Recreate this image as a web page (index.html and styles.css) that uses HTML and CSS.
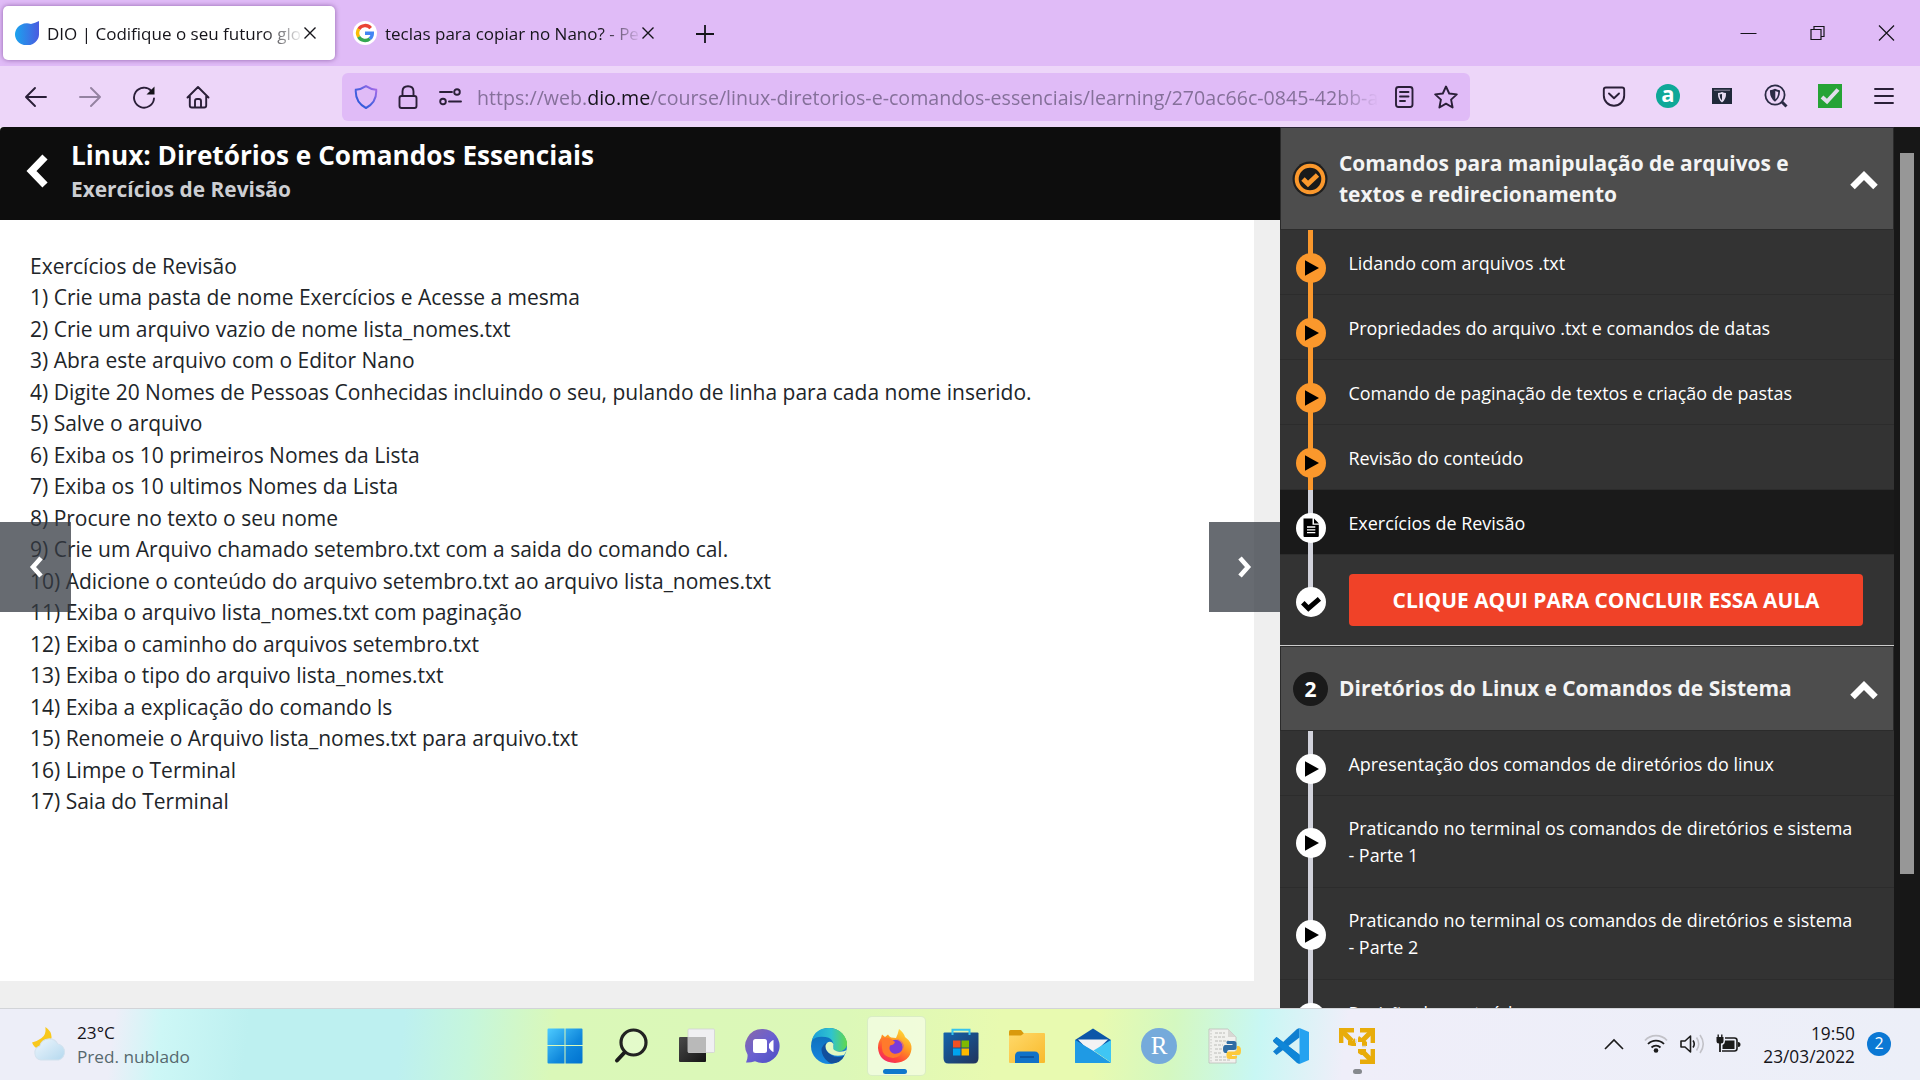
FILE: index.html
```html
<!DOCTYPE html>
<html lang="pt-BR">
<head>
<meta charset="utf-8">
<title>DIO | Codifique o seu futuro</title>
<link rel="stylesheet" href="styles.css">
</head>
<body>
<svg class="defs" aria-hidden="true">
  <defs>
    <linearGradient id="gDio" x1="0" x2="1"><stop offset="0" stop-color="#1ba3ee"/><stop offset="1" stop-color="#4a5be0"/></linearGradient>
    <linearGradient id="gShield" x1="0" y1="1" x2="1" y2="0"><stop offset="0" stop-color="#2456d8"/><stop offset=".5" stop-color="#4f62e0"/><stop offset="1" stop-color="#b06ae8"/></linearGradient>
    <linearGradient id="gWin" x1="0" y1="0" x2="1" y2="1"><stop offset="0" stop-color="#4dcbff"/><stop offset=".6" stop-color="#1088dc"/><stop offset="1" stop-color="#0072cf"/></linearGradient>
    <linearGradient id="gChat" x1="0" y1="0" x2="1" y2="1"><stop offset="0" stop-color="#8a6aa8"/><stop offset=".5" stop-color="#6a5fd0"/><stop offset="1" stop-color="#4a4fc4"/></linearGradient>
    <linearGradient id="gEdgeTop" x1="0" x2="1"><stop offset="0" stop-color="#1a9ed8"/><stop offset=".55" stop-color="#2fc3cf"/><stop offset="1" stop-color="#62d84c"/></linearGradient>
    <linearGradient id="gEdge" x1="0" y1="0" x2="0" y2="1"><stop offset="0" stop-color="#0c6ab4"/><stop offset="1" stop-color="#1788e0"/></linearGradient>
    <linearGradient id="gFox" x1=".8" y1="0" x2=".2" y2="1"><stop offset="0" stop-color="#ffe03a"/><stop offset=".4" stop-color="#ff9a22"/><stop offset=".75" stop-color="#ff4738"/><stop offset="1" stop-color="#f0246c"/></linearGradient>
    <linearGradient id="gStore" x1="0" y1="0" x2="1" y2="1"><stop offset="0" stop-color="#1464ac"/><stop offset="1" stop-color="#22345c"/></linearGradient>
    <linearGradient id="gFolder" x1="0" y1="0" x2="1" y2="1"><stop offset="0" stop-color="#ffd96a"/><stop offset="1" stop-color="#f8ba2c"/></linearGradient>
    <linearGradient id="gDark" x1="0" y1="0" x2="1" y2="1"><stop offset="0" stop-color="#4a4a4a"/><stop offset="1" stop-color="#141414"/></linearGradient>
    <linearGradient id="gCloud" x1="0" y1="0" x2="1" y2="1"><stop offset="0" stop-color="#eef6fd"/><stop offset="1" stop-color="#b4d8ee"/></linearGradient>
    <symbol id="play" viewBox="0 0 30 30"><circle cx="15" cy="15" r="15" fill="currentColor"/><path class="glyph" d="M9 7.2L23 15 9 22.8z"/></symbol>
    <symbol id="check" viewBox="0 0 30 30"><circle cx="15" cy="15" r="15" fill="currentColor"/><path d="M6.800 15.800l5.600 5.600L23.400 11.800" fill="none" stroke="#000" stroke-width="5"/></symbol>
    <symbol id="doc" viewBox="0 0 30 30"><circle cx="15" cy="15" r="15" fill="currentColor"/><path d="M7.500 5.500h9v6.300h6.300V23q0 1-1 1H8.500q-1 0-1-1z"/><path d="M18 5.500l4.900 4.900H18z"/><path d="M11 14h8.300M11 16.800h8.300M11 19.600h8.300" stroke="#fff" stroke-width="1.300"/></symbol>
    <symbol id="up" viewBox="0 0 28 20"><path d="M2.500 16L14 4.500 25.500 16" fill="none" stroke="currentColor" stroke-width="6.400"/></symbol>
    <symbol id="x" viewBox="0 0 16 16"><path d="M2.500 2.500l11 11M13.500 2.500l-11 11" fill="none" stroke="currentColor" stroke-width="1.400"/></symbol>
  </defs>
</svg>

<header class="tabbar">
  <div class="tab active">
    <svg class="fav" viewBox="0 0 24 24"><path d="M24 0v13a12 11 0 1 1-8-10q4-1 8-3z" fill="url(#gDio)"/></svg>
    <span class="tab-title">DIO | Codifique o seu futuro glo</span>
    <svg class="close"><use href="#x"/></svg>
  </div>
  <div class="tab second">
    <svg class="fav" viewBox="0 0 24 24"><circle cx="12" cy="12" r="12" fill="#fff"/><g fill="none" stroke-width="3.400"><path d="M17.700 7.100A7.400 7.400 0 0 0 5.800 8.100" stroke="#ea4335"/><path d="M5.800 8A7.400 7.400 0 0 0 5.800 16" stroke="#fbbc05"/><path d="M5.700 15.900A7.400 7.400 0 0 0 16.900 17.700" stroke="#34a853"/><path d="M12 12.200h7.300a7.400 7.400 0 0 1-2.500 5.600" stroke="#4285f4"/></g></svg>
    <span class="tab-title">teclas para copiar no Nano? - Pe</span>
    <svg class="close"><use href="#x"/></svg>
  </div>
  <svg class="newtab" viewBox="0 0 18 18"><path d="M9 0v18M0 9h18" stroke="#15141a" stroke-width="1.800"/></svg>
  <div class="winbtns">
    <svg viewBox="0 0 16 16"><path d="M0 8.500h16" stroke="#15141a"/></svg>
    <svg viewBox="0 0 16 16"><path d="M1.500 4.500h10v10h-10zM4.500 4.500v-3h10v10h-3" fill="none" stroke="#15141a" stroke-width="1.200"/></svg>
    <svg viewBox="0 0 16 16"><path d="M.5.500l15 15M15.500.500l-15 15" stroke="#15141a" stroke-width="1.200"/></svg>
  </div>
</header>

<nav class="toolbar">
  <div class="tools left">
    <svg viewBox="0 0 24 24"><path d="M22 12H2.500M11 3L2 12l9 9" class="ln"/></svg>
    <svg viewBox="0 0 24 24" class="dim"><path d="M2 12h19.500M13 3l9 9-9 9" class="ln"/></svg>
    <svg viewBox="0 0 24 24"><path d="M19.500 6A10 10 0 1 0 22 13.500" class="ln"/><path d="M22.500 1.500v8h-8z" fill="#15141a"/></svg>
    <svg viewBox="0 0 24 24"><path d="M1.500 12.500L12 2l10.500 10.500M3.800 11v9.500q0 2 2 2h12.400q2 0 2-2V11M9 22v-6q0-2 2-2h2q2 0 2 2v6" class="ln"/></svg>
  </div>
  <div class="urlbar">
    <svg viewBox="0 0 24 24"><path d="M12 1.200Q7 4.500 1.800 4.800 1 17 12 23 23 17 22.200 4.800 17 4.500 12 1.200z" fill="none" stroke="url(#gShield)" stroke-width="2"/></svg>
    <svg viewBox="0 0 24 24"><path d="M6.500 11V6.500q0-5.300 5.500-5.300t5.500 5.300V11M5.500 11h13q2 0 2 2v8q0 2-2 2h-13q-2 0-2-2v-8q0-2 2-2z" class="ln"/></svg>
    <svg viewBox="0 0 24 24"><path d="M2 7h12M11 16.500h12" class="ln"/><circle cx="19" cy="7" r="2.800" class="ln"/><circle cx="5" cy="16.500" r="2.800" class="ln"/></svg>
    <span class="url">https://web.<b>dio.me</b>/course/linux-diretorios-e-comandos-essenciais/learning/270ac66c-0845-42bb-a</span>
    <svg viewBox="0 0 24 24"><rect x="4" y="2" width="16.500" height="20" rx="2.500" class="ln"/><path d="M8 7h8.500M8 11.500h8.500M8 16h5" class="ln"/></svg>
    <svg viewBox="0 0 24 24"><path d="M12 1.500l3.200 7 7.600.900-5.700 5.200 1.500 7.900L12 18.600l-6.600 3.900 1.500-7.900L1.200 9.400l7.600-.900z" class="ln"/></svg>
  </div>
  <div class="tools right">
    <svg viewBox="0 0 24 24"><path d="M4 3.500h16q2.200 0 2.200 2.200v5.800a10.200 10.200 0 0 1-20.400 0V5.700q0-2.200 2.200-2.200zM7 9.500l5 4.800 5-4.800" class="ln"/></svg>
    <span class="ext-a">a</span>
    <svg viewBox="0 0 24 24"><path d="M2 4h20v16H2z" fill="#20293a"/><path d="M4 6.200h16" stroke="#8d8ba0"/><path d="M12 8q2 1 4 1 .4 6-4 9.500Q7.600 15 8 9q2 0 4-1z" fill="#e6ddf2"/><path d="M12 10v6.500Q9.500 14 9.500 10.500z" fill="#20293a"/></svg>
    <svg viewBox="0 0 24 24"><circle cx="11" cy="11" r="9.600" fill="none" stroke="#2b2b45" stroke-width="1.800"/><path d="M18 18l4.500 4.500" stroke="#2b2b45" stroke-width="3"/><path d="M11 4.800q2.500 1.400 5 1.400.500 7.500-5 11.500Q5.500 13.700 6 6.200q2.500 0 5-1.400z" fill="#2b2b45"/><path d="M11.300 7q1.300.800 2.900.900 0 5-2.900 7.300z" fill="#edd6f9"/></svg>
    <svg viewBox="0 0 24 24"><path d="M0 0h24v24H0z" fill="#26a336"/><path d="M4 13l5 4.500L20 5.500" fill="none" stroke="#e2dcec" stroke-width="4"/></svg>
    <svg viewBox="0 0 24 24"><path d="M3 5h18M3 12h18M3 19h18" class="ln"/></svg>
  </div>
</nav>

<div class="page">
  <main class="lesson">
    <div class="lesson-head">
      <svg class="back" viewBox="0 0 22 34"><path d="M19 3L5.500 17 19 31" fill="none" stroke="#fff" stroke-width="7.200"/></svg>
      <div>
        <h1>Linux: Diretórios e Comandos Essenciais</h1>
        <h2>Exercícios de Revisão</h2>
      </div>
    </div>
    <div class="sheet">
      <p>Exercícios de Revisão<br>
      1) Crie uma pasta de nome Exercícios e Acesse a mesma<br>
      2) Crie um arquivo vazio de nome lista_nomes.txt<br>
      3) Abra este arquivo com o Editor Nano<br>
      4) Digite 20 Nomes de Pessoas Conhecidas incluindo o seu, pulando de linha para cada nome inserido.<br>
      5) Salve o arquivo<br>
      6) Exiba os 10 primeiros Nomes da Lista<br>
      7) Exiba os 10 ultimos Nomes da Lista<br>
      8) Procure no texto o seu nome<br>
      9) Crie um Arquivo chamado setembro.txt com a saida do comando cal.<br>
      10) Adicione o conteúdo do arquivo setembro.txt ao arquivo lista_nomes.txt<br>
      11) Exiba o arquivo lista_nomes.txt com paginação<br>
      12) Exiba o caminho do arquivos setembro.txt<br>
      13) Exiba o tipo do arquivo lista_nomes.txt<br>
      14) Exiba a explicação do comando ls<br>
      15) Renomeie o Arquivo lista_nomes.txt para arquivo.txt<br>
      16) Limpe o Terminal<br>
      17) Saia do Terminal</p>
    </div>
    <div class="pager prev"><svg viewBox="0 0 14 22"><path d="M12 2L4 11l8 9" fill="none" stroke="#fff" stroke-width="4.600"/></svg></div>
    <div class="pager next"><svg viewBox="0 0 14 22"><path d="M2 2l8 9-8 9" fill="none" stroke="#fff" stroke-width="4.600"/></svg></div>
  </main>

  <aside class="course">
    <section>
      <div class="mod tall">
        <svg class="badge" viewBox="0 0 36 36"><circle cx="18" cy="18" r="17.500" fill="#1f1f1f"/><circle cx="18" cy="18" r="13.300" fill="#1a1a1a" stroke="#fb982c" stroke-width="4"/><path d="M11 18l5 5 9.500-9" fill="none" stroke="#fb982c" stroke-width="4.800"/></svg>
        <h3>Comandos para manipulação de arquivos e textos e redirecionamento</h3>
        <svg class="toggle"><use href="#up"/></svg>
      </div>
      <ul>
        <li class="item done"><svg><use href="#play"/></svg><span>Lidando com arquivos .txt</span></li>
        <li class="item done"><svg><use href="#play"/></svg><span>Propriedades do arquivo .txt e comandos de datas</span></li>
        <li class="item done"><svg><use href="#play"/></svg><span>Comando de paginação de textos e criação de pastas</span></li>
        <li class="item done"><svg><use href="#play"/></svg><span>Revisão do conteúdo</span></li>
        <li class="item current"><svg><use href="#doc"/></svg><span>Exercícios de Revisão</span></li>
        <li class="item finish"><svg><use href="#check"/></svg><button>CLIQUE AQUI PARA CONCLUIR ESSA AULA</button></li>
      </ul>
    </section>
    <section>
      <div class="mod">
        <span class="num">2</span>
        <h3>Diretórios do Linux e Comandos de Sistema</h3>
        <svg class="toggle"><use href="#up"/></svg>
      </div>
      <ul>
        <li class="item"><svg><use href="#play"/></svg><span>Apresentação dos comandos de diretórios do linux</span></li>
        <li class="item two"><svg><use href="#play"/></svg><span>Praticando no terminal os comandos de diretórios e sistema - Parte 1</span></li>
        <li class="item two"><svg><use href="#play"/></svg><span>Praticando no terminal os comandos de diretórios e sistema - Parte 2</span></li>
        <li class="item"><svg><use href="#play"/></svg><span>Revisão do conteúdo</span></li>
      </ul>
    </section>
  </aside>
  <div class="scroll"><div class="thumb"></div></div>
</div>

<footer class="taskbar">
  <div class="weather">
    <svg viewBox="0 0 34 34"><path d="M14 1q1 8-4 11-4 3-9 4 2 6 8 6 10-1 11-11 0-6-6-10z" fill="#f8c81c"/><path d="M9.500 33a7 7 0 0 1-1-13.500 9.500 9.500 0 0 1 17.500-2 8 8 0 0 1 1 15.500z" fill="url(#gCloud)" stroke="#d3e2ee"/></svg>
    <div><span>23°C</span><span class="sub">Pred. nublado</span></div>
  </div>
  <div class="apps">
    <div class="app"><svg viewBox="0 0 36 36"><path d="M1.500.500h16v16.500h-17V1.500q0-1 1-1zM18.500.500h16q1 0 1 1V17h-17zM.500 18h17v17.500h-16q-1 0-1-1zM18.500 18h17v16.500q0 1-1 1h-16z" fill="url(#gWin)"/></svg></div>
    <div class="app"><svg viewBox="0 0 36 36"><circle cx="20.500" cy="14.500" r="12.500" fill="#fff" fill-opacity=".25" stroke="#222" stroke-width="3.200"/><path d="M11.500 24.500l-7.500 8" stroke="#1c1c1c" stroke-width="4" stroke-linecap="round"/></svg></div>
    <div class="app"><svg viewBox="0 0 36 36"><rect x="0" y="9" width="27" height="25" rx="1" fill="url(#gDark)"/><rect x="9" y="1" width="26.500" height="23.500" rx="1" fill="#f0f0f2" stroke="#d2d2d4" stroke-width=".8"/><path d="M9 9h18v15.500H10q-1 0-1-1z" fill="#b9b9b9"/></svg></div>
    <div class="app"><svg viewBox="0 0 36 36"><path d="M18 1a17 17 0 1 1-8 32.200Q5 35 1 34.500q2-4 1.500-8A17 17 0 0 1 18 1z" fill="url(#gChat)"/><rect x="8" y="11" width="14" height="14" rx="2.500" fill="#fff"/><path d="M24 16q3-4 4.500-4v12q-1.500 0-4.500-4z" fill="#fff"/></svg></div>
    <div class="app"><svg viewBox="0 0 36 36"><circle cx="18" cy="18" r="18" fill="url(#gEdge)"/><path d="M1 12Q4 .3 18 0q14 .5 18 14 1 8-8 9.500-7-.2-6-4 1-1.500.5-3.500-1-6-8-7Q6 7.500 1 12z" fill="url(#gEdgeTop)"/><path d="M15 15q-6 4-4 10 2 7 9 10.500 10 0 13.500-8-8 3.500-14-1-5-4-2.500-9z" fill="#124f9c"/><path d="M22.500 16q-2-3-5-2-3 1.500-3 4.500 0 5 6 8 5 2.200 12.500.500L36 22q-3 2-8 1.800-5-.8-5.800-3.300z" fill="#e2f8c0"/></svg></div>
    <div class="app on"><svg viewBox="0 0 36 36"><path d="M22 1q5 4 6 8 7 5 6.500 12Q33 34 18 35 2 34 1 20q0-6 3-10l1-3.500 3 2.500 3-2.500q1 2 3 3l5 .5q2-4 3-9z" fill="url(#gFox)"/><circle cx="18.500" cy="19" r="7.200" fill="#7a3bd8"/><path d="M5 10q6-1 9 1l4 3q-1 3-5 3.500-2 5 3 8 6 1 9-3-1 7-9 7.500Q5 29 5 20z" fill="#ff7a2c"/><path d="M19 11q6 1 7.500 6 0 3-1 5 3-8-6.500-11z" fill="#b13cd0"/></svg></div>
    <div class="app"><svg viewBox="0 0 36 36"><path d="M.5 5.500q0-1 1-1h33q1 0 1 1V30q0 5.500-5 5.500h-25q-5 0-5-5.500z" fill="url(#gStore)"/><path d="M9.500 7V1.800h17V7" fill="none" stroke="#36c4ee" stroke-width="2"/><path d="M10 12.500h7.500V19.500H10z" fill="#f25022"/><path d="M18.500 12.500H26V19.500h-7.500z" fill="#7fba00"/><path d="M10 20.500h7.500V27.500H10z" fill="#00a4ef"/><path d="M18.500 20.500H26V27.500h-7.500z" fill="#ffb900"/></svg></div>
    <div class="app"><svg viewBox="0 0 36 36"><path d="M0 8V3.500Q0 2 1.500 2H12l3 3.500V9z" fill="#d99a0c"/><path d="M0 7.500h12l3.500-2.500H35q1 0 1 1v28q0 1-1 1H1q-1 0-1-1z" fill="url(#gFolder)"/><path d="M6 35V28q0-4.500 4.500-4.500h15q4.500 0 4.500 4.500v7z" fill="#1072c8"/><path d="M11 29h14" stroke="#0a4c94" stroke-width="1.500"/></svg></div>
    <div class="app"><svg viewBox="0 0 36 36"><path d="M0 12L18 .5 36 12v8H0z" fill="#0b56a8"/><path d="M3 11.500h30L20 24h-5z" fill="#f2f2f4"/><path d="M0 12l20 12.500 16 10.500H1q-1 0-1-1z" fill="#1f9ee6"/><path d="M36 12v22.500L18.500 22.500z" fill="#3fc6f4"/><path d="M0 12l18.500 11L36 35H1q-1 0-1-1z" fill="#1f9ae4"/></svg></div>
    <div class="app"><span class="r">R</span></div>
    <div class="app"><svg viewBox="0 0 36 36"><path d="M2 1h19l8 8v26H2z" fill="#f1f1ee" stroke="#bdbdb8" stroke-width=".8"/><path d="M21 1v8h8z" fill="#d8d8d4"/><path d="M4 2v32" stroke="#c4c4c0" stroke-dasharray="1.500 1.500"/><path d="M8 5h10M7 9h12M8 13h14M7 17h9M8 21h8M7 25h8M8 29h14M8 32h16" stroke="#bcbcb8" stroke-dasharray="3 1"/><path d="M21 13h6q2.500 0 2.500 2.500V20q0 2-2.500 2h-5q-2 0-2 3h-1.500Q16 25 16 21t2.500-4h7v-1H20q-1.500-3 1-3z" fill="#2f6da4"/><path d="M27.500 31h-5q-3 0-3-2.500v-3q0-2 2.500-2h5q3 0 3-3V18h1q3 0 3 4.500T31.500 27H25v1h5q.5 3-2.500 3z" fill="#fcc93a"/></svg></div>
    <div class="app"><svg viewBox="0 0 36 36"><path d="M0 12.500L3.500 9 27 27v8.500L25 35 .5 14z" fill="#0a6ab8"/><path d="M26.500 0v9.500L3.500 27 0 23.500 24 1z" fill="#0f7fd0"/><path d="M0 12.500L3.500 9l23 17.500V36L24 35z" fill="#0e86d8"/><path d="M26.500 0L36 4v28l-9.500 4z" fill="#25a2f0"/></svg></div>
    <div class="app run"><svg viewBox="0 0 36 36"><g fill="none" stroke="#e8ac0a" stroke-width="4.400"><path d="M2.200 15V2.200H15M21 2.200h12.800V15M33.800 21v12.800H21"/><path d="M3 3l10 10M33 3L24 12M33 33l-9-9" stroke-width="5"/></g><path d="M9 13h4l3-3v3h1v5h-4l-4-1zM20 8l8 6v4h-5v-4h-4v-4zM19 21h8v6h-5l-3-2z" fill="#e8ac0a"/><path d="M17 11v4M23 18.500h4" stroke="#d8d8da" stroke-width="1.600"/></svg></div>
  </div>
  <div class="tray">
    <svg class="chev" viewBox="0 0 20 12"><path d="M1 11l9-9 9 9" fill="none" stroke="#1b1b1b" stroke-width="1.600"/></svg>
    <svg class="wifi" viewBox="0 0 26 20"><g fill="none" stroke="#1b1b1b" stroke-width="1.800"><path d="M2 6.500a15 15 0 0 1 22 0" stroke="#c2c2c8"/><path d="M5 10a11 11 0 0 1 16 0M8.500 13.500a6.500 6.500 0 0 1 9 0"/></g><circle cx="13" cy="16.500" r="2.300" fill="#1b1b1b"/></svg>
    <svg class="snd" viewBox="0 0 25 20"><path d="M1 7h4l5.500-5v16L5 13H1z" fill="none" stroke="#1b1b1b" stroke-width="1.600" stroke-linejoin="round"/><path d="M13 6.500q2.500 3.500 0 7" fill="none" stroke="#1b1b1b" stroke-width="1.600"/><path d="M16.500 3.500q4.500 6.500 0 13M20 1q6.500 9 0 18" fill="none" stroke="#c2c2c8" stroke-width="1.600"/></svg>
    <svg class="bat" viewBox="0 0 25 20"><path d="M9 4h9.500q2.500 0 2.500 2.500v8q0 2.500-2.500 2.500H6" fill="none" stroke="#1b1b1b" stroke-width="1.600"/><path d="M9 6.500h9.500v8.500H6.500V11Q9 10 9 6.500zM22 8q2.500 0 2.500 2.500T22 13zM.5 3h7v4q0 2.500-2.600 2.500V18H3.100V9.500Q.5 9.500.5 7zM1.500.5h1.400V3H1.500zM5.100.5h1.400V3H5.100z" fill="#1b1b1b"/></svg>
    <div class="clock"><span>19:50</span><span>23/03/2022</span></div>
    <span class="notif">2</span>
  </div>
</footer>
</body>
</html>
```
FILE: styles.css
```css
* { box-sizing: border-box; }

body {
  margin: 0;
  width: 1920px;
  height: 1080px;
  overflow: hidden;
  display: flex;
  flex-direction: column;
  font-family: "Open Sans", "Noto Sans", sans-serif;
  color: #15141a;
}

svg { display: block; flex: none; }
.defs { width: 0; height: 0; position: absolute; }
.ln {
  fill: none;
  stroke: #2a1f38;
  stroke-width: 1.9;
  stroke-linejoin: round;
  stroke-linecap: round;
}

/* Tab strip */
.tabbar {
  height: 66px;
  flex: none;
  background: #e0bbf7;
  display: flex;
  align-items: center;
  padding-left: 3px;
}
.tab {
  width: 332px;
  height: 54px;
  display: flex;
  align-items: center;
  padding: 0 17px 0 12px;
}
.tab.active {
  background: #fff;
  border-radius: 5px;
  box-shadow: 0 0 5px rgba(80, 30, 110, .55);
}
.tab.second { margin-left: 6px; }
.fav { width: 24px; height: 24px; }
.tab-title {
  flex: 1;
  margin-left: 8px;
  white-space: nowrap;
  overflow: hidden;
  font-size: 17px;
  -webkit-mask-image: linear-gradient(90deg, #000 85%, transparent 101%);
  mask-image: linear-gradient(90deg, #000 85%, transparent 101%);
}
.close { width: 16px; height: 16px; margin-left: 1px; }
.newtab { width: 18px; height: 18px; margin-left: 23px; margin-top: 2px; }
.winbtns { margin-left: auto; margin-right: -1px; display: flex; }
.winbtns svg { width: 69px; height: 16px; }

/* Navigation toolbar */
.toolbar {
  height: 61px;
  flex: none;
  background: #edd6f9;
  display: flex;
  align-items: center;
  padding: 0 9px;
}
.tools { display: flex; align-items: center; }
.tools > svg { width: 24px; height: 24px; margin: 0 15px; }
.tools.right { margin-left: auto; margin-top: -2px; }
.dim { opacity: .45; }
.urlbar {
  width: 1128px;
  height: 48px;
  margin-left: 117px;
  padding: 0 3px;
  border-radius: 6px;
  background: #e0bbf7;
  display: flex;
  align-items: center;
}
.urlbar > svg { width: 24px; height: 24px; margin: 0 9px; }
.url {
  flex: 1;
  margin-left: 6px;
  padding-top: 1px;
  font-size: 19.6px;
  color: #85709a;
  white-space: nowrap;
  overflow: hidden;
  -webkit-mask-image: linear-gradient(90deg, #000 95%, transparent 99.5%);
  mask-image: linear-gradient(90deg, #000 95%, transparent 99.5%);
}
.url b { font-weight: 400; color: #15141a; }
.ext-a {
  width: 24px;
  height: 24px;
  margin: 0 15px;
  border-radius: 50%;
  background: #0fa898;
  color: #fff;
  font-weight: 700;
  font-size: 22px;
  line-height: 19px;
  text-align: center;
}

/* Page area */
.page {
  height: 881px;
  flex: none;
  display: flex;
  background: #171717;
}
.lesson {
  width: 1280px;
  position: relative;
  background: #efefef;
}
.lesson-head {
  height: 93px;
  display: flex;
  align-items: flex-start;
  padding: 10px 0 0 26px;
  background: #0d0d0d;
  border-top-left-radius: 4px;
}
.back { width: 22px; height: 34px; margin: 17px 23px 0 0; }
.lesson-head h1 {
  margin: 0;
  font-size: 26.2px;
  line-height: 37px;
  color: #fff;
}
.lesson-head h2 {
  margin: 0;
  font-size: 20.9px;
  line-height: 31px;
  color: #ccced2;
}
.sheet {
  width: 1254px;
  height: 761px;
  padding: 30.5px 30px 30px;
  background: #fff;
}
.sheet p {
  margin: 0;
  font-size: 21px;
  line-height: 31.5px;
  color: #212529;
}
.pager {
  position: absolute;
  top: 395px;
  width: 71px;
  height: 90px;
  display: flex;
  align-items: center;
  justify-content: center;
  background: rgba(52, 58, 66, .75);
}
.pager svg { width: 14px; height: 22px; }
.prev { left: 0; }
.next { right: 0; }

/* Course outline */
.course {
  width: 614px;
  overflow: hidden;
  background: #333;
  border-top: 1px solid #2a2433;
}
.mod {
  height: 85px;
  display: flex;
  align-items: center;
  padding: 0 15px 0 12px;
  background: #4d4d4d;
  border: 1px solid #2b2b2b;
}
.mod.tall { height: 102px; padding-left: 11px; border-top: 0; }
.badge { width: 36px; height: 36px; }
.num {
  width: 35px;
  height: 34px;
  border-radius: 50%;
  background: #1a1a1a;
  color: #fff;
  font-weight: 700;
  font-size: 21px;
  line-height: 34px;
  text-align: center;
}
.mod h3 {
  flex: 1;
  margin: 0 0 0 11px;
  padding-right: 50px;
  font-size: 20.95px;
  line-height: 31.5px;
  color: #f4f4f4;
}
.mod.tall h3 { margin-left: 11px; padding-top: 1px; }
.mod .toggle { width: 28px; height: 20px; margin-top: 4px; color: #fff; }
.course ul { margin: 0; padding: 0; list-style: none; }
.item {
  --rail: #d2d3dc;
  --rule: #2c2c2c;
  height: 65px;
  display: flex;
  align-items: center;
  padding: 0 28px 1px 16px;
  font-size: 17.97px;
  line-height: 27px;
  color: #fff;
  background:
    linear-gradient(var(--rail), var(--rail)) 28px 0 / 5px 100% no-repeat,
    linear-gradient(var(--rule), var(--rule)) 0 100% / 100% 1px no-repeat;
}
.item > svg { width: 30px; height: 30px; margin-top: 11px; color: #fff; }
.item > span { margin: 2px 0 0 22.4px; }
.item.done { --rail: #fb982c; }
.item.done > svg { color: #fb982c; }
.item.done .glyph { fill: #1f1a14; }
.item.current { background-color: #1a1a1a; }
.item.finish {
  --rule: #ccc;
  height: 91px;
  align-items: flex-start;
  padding-top: 19px;
  background-size: 5px 40px, 100% 1px;
}
.item.finish > svg { margin-top: 13px; }
.item.finish button {
  width: 514px;
  height: 52px;
  margin-left: 23px;
  padding: 0;
  border: 0;
  border-radius: 4px;
  background: #f04228;
  color: #fff;
  font: 700 20.9px "Open Sans", sans-serif;
}
.item.two { height: 92px; }
.item.two > svg { margin-top: 2px; }
.item.two > span { margin-top: 0; padding-right: 10px; }

.scroll { width: 26px; padding: 26px 6px 0; }
.thumb { height: 721px; background: #979797; }

/* Taskbar */
.taskbar {
  height: 72px;
  flex: none;
  position: relative;
  display: flex;
  align-items: center;
  border-top: 1px solid #d2d4d8;
  background: linear-gradient(97deg, #edeef8 0 6%, #cdf7f6 8.500%, #bdf0f0 13%, #bdf0f0 21%, #c6f6dc 24.500%, #daf8b8 29%, #dcf8b8 44%, #e8fab0 52%, #e8fab0 57%, #d4f8c0 61%, #c8f7f4 65.500%, #efeef9 70%, #eceff8 100%);
}
.weather {
  width: 532px;
  padding: 0 0 0 31px;
  display: flex;
  align-items: center;
  font-size: 17.2px;
  line-height: 24px;
}
.weather svg { width: 35px; height: 35px; margin: -2px 11px 0 0; }
.weather span { display: block; }
.weather .sub { color: #56686e; }
.apps { display: flex; height: 71px; }
.app {
  position: relative;
  width: 66px;
  padding: 19px 0 0 15px;
}
.app svg { width: 36px; height: 36px; }
.app.on::before {
  content: "";
  position: absolute;
  left: 5px;
  top: 7px;
  width: 57px;
  height: 58px;
  border-radius: 5px;
  background: rgba(255, 255, 255, .5);
  border: 1px solid rgba(150, 190, 130, .25);
}
.app.on svg { position: relative; }
.app.on::after, .app.run::after {
  content: "";
  position: absolute;
  left: 21px;
  top: 60px;
  width: 24px;
  height: 5px;
  border-radius: 3px;
  background: #0f78cc;
}
.app.run::after { left: 29px; width: 9px; background: #85888d; }
.r {
  display: block;
  width: 36px;
  height: 36px;
  border-radius: 50%;
  background: #75aadb;
  color: #fff;
  font: 25px/35px "Liberation Serif", serif;
  text-align: center;
}
.tray {
  margin-left: auto;
  padding: 0 29px 0 0;
  display: flex;
  align-items: center;
}
.tray > svg, .notif { margin-top: -2px; }
.chev { width: 20px; height: 12px; margin-right: 19px; }
.wifi { width: 26px; height: 20px; margin-right: 11px; }
.snd { width: 25px; height: 20px; margin-right: 11px; }
.bat { width: 25px; height: 20px; margin-right: 21px; }
.clock {
  width: 93px;
  font-size: 17.3px;
  line-height: 23px;
  text-align: right;
}
.clock span { display: block; }
.notif {
  width: 24px;
  height: 24px;
  margin-left: 12px;
  border-radius: 50%;
  background: #0b78d4;
  color: #fff;
  font-size: 16px;
  line-height: 23px;
  text-align: center;
}
```
